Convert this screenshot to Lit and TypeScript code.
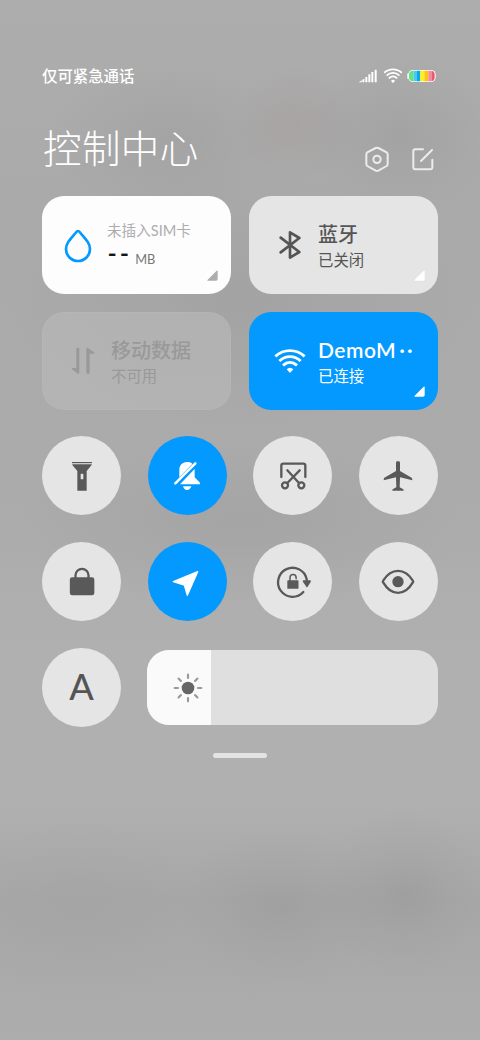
import { LitElement, html, svg, css } from "lit";
import { customElement } from "lit/decorators.js";

// Toggle glyphs are drawn around the origin in a 120-unit square.
const glyphs = {
  torch: svg`<rect x="-30" y="-42" width="60" height="3.6"/>
    <path fill-rule="evenodd" d="M-29-35H29V-33L14-15V44H-14V-15L-29-33ZM-2-7Q-4-7-4-5V8Q-4 10-2 10H2Q4 10 4 8V-5Q4-7 2-7Z"/>`,
  mute: svg`<path d="M-23 6V-19C-23-33-13-42 1-42C8-42 13-40 16-36L-23 4Z"/>
    <path d="M23-21V4L39 20V25H-21L22-20Z"/>
    <path d="M-12 31H13C11 38 6 42 0 42S-10 38-12 31Z"/>
    <path d="M-35 22L25-38" fill="none" stroke="currentColor" stroke-width="7.5" stroke-linecap="round"/>`,
  scissors: svg`<g fill="none" stroke="currentColor" stroke-width="7">
    <path d="M-35 3V-31Q-35-37-29-37H31Q37-37 37-31V3" stroke-linecap="round"/>
    <circle cx="-24" cy="28" r="9"/><circle cx="25" cy="28" r="9"/>
    <path d="M-17 21L20-17M18 21L-17-17" stroke-linecap="round"/></g>`,
  plane: svg`<path d="M-6-40Q-6-44-2-44H2Q6-44 6-40V-15L41 5Q43 7 43 13L6 4L5 34L16 40Q17 41 17 44H-17Q-17 41-16 40L-5 34L-6 4L-43 13Q-43 7-41 5L-6-15Z"/>`,
  lock: svg`<rect x="-36.500" y="-14" width="73.500" height="54" rx="7"/>
    <path d="M-19.500-12V-20A19.500 19.500 0 0 1 19.500-20V-12" fill="none" stroke="currentColor" stroke-width="7"/>`,
  locate: svg`<path d="M32-31L-41-1L-8 9L1 40Z" stroke="currentColor" stroke-width="4" stroke-linejoin="round"/>`,
  rotate: svg`<path d="M31 30A43.500 43.500 0 1 1 41-9V-3" fill="none" stroke="currentColor" stroke-width="7" stroke-linecap="round"/>
    <path d="M31-5H52Q55-3 53 0L44 14Q42 17 40 14L30 0Q28-3 31-5Z"/>
    <rect x="-17" y="-5" width="33.500" height="25.500" rx="2"/>
    <path d="M-9-4V-13A9.200 9.200 0 0 1 9.400-13V-10" fill="none" stroke="currentColor" stroke-width="4.500" stroke-linecap="round"/>`,
  eye: svg`<path d="M-44 2Q-47-1-44-5C-20-43 20-43 44-5Q47-1 44 2C20 43-20 43-44 2Z" fill="none" stroke="currentColor" stroke-width="7"/>
    <circle cy="-1" r="17"/>`,
};

const wifiArcs = svg`<g fill="none" stroke="currentColor" stroke-width="8.500">
  <path d="M-44-14Q-25-31 0-31T44-14"/><path d="M-32 0Q-18-13 0-13T32 0"/><path d="M-21 13Q-11 4 0 4T21 13"/></g>
  <path d="M-10 25Q0 15 10 25L2 34Q0 36-2 34Z"/>`;

@customElement("round-toggle")
class RoundToggle extends LitElement {
  static properties = { icon: {}, on: { type: Boolean, reflect: true } };
  declare icon: keyof typeof glyphs;
  declare on: boolean;
  static styles = css`
    :host { display: flex; align-items: center; justify-content: center; width: 79px; height: 79px; border-radius: 50%; background: #e5e5e5; color: #595959; }
    :host([on]) { background: #0399ff; color: #fff; }
    svg { width: 40px; height: 40px; fill: currentColor; overflow: visible; }
  `;
  render() {
    return html`<svg viewBox="-60 -60 120 120">${glyphs[this.icon]}</svg>`;
  }
}

@customElement("app-root")
class AppRoot extends LitElement {
  static styles = css`
    :host {
      display: block; box-sizing: border-box; width: 480px; height: 1040px; padding: 66px 42px 0; overflow: hidden;
      font-family: Lato, "Noto Sans CJK SC", sans-serif; line-height: 1;
      background:
        radial-gradient(ellipse 85px 85px at 405px 895px, rgba(125,125,125,.2), rgba(125,125,125,.08) 50%, transparent),
        radial-gradient(ellipse 105px 80px at 280px 908px, rgba(125,125,125,.17), rgba(125,125,125,.07) 50%, transparent),
        radial-gradient(ellipse 120px 90px at 80px 910px, rgba(130,130,130,.08), transparent),
        radial-gradient(ellipse 60px 60px at 295px 125px, rgba(150,130,125,.18), transparent),
        radial-gradient(ellipse 100px 80px at 400px 135px, rgba(130,130,130,.2), transparent),
        radial-gradient(ellipse 120px 80px at 170px 140px, rgba(135,135,135,.2), transparent),
        radial-gradient(ellipse 230px 130px at 240px 300px, rgba(140,140,140,.25), transparent),
        radial-gradient(ellipse 230px 80px at 240px 525px, rgba(145,140,140,.24), transparent),
        linear-gradient(#adadad, #aaa 200px, #ababab 500px, #b0b0b0 650px, #b0b0b0 800px, #a7a7a7 900px, #adadad);
    }
    header, .heading, .tools, .card, .amount, .brightness, .bottom { display: flex; }
    header { height: 20px; align-items: center; justify-content: space-between; color: #fff; }
    .carrier { font-size: 15.400px; font-weight: 500; padding-top: 2px; }
    .status { width: 80px; height: 20px; fill: currentColor; }
    .heading { height: 110px; justify-content: space-between; color: #fff; }
    h1 { margin: 42px 0 0 1px; font-size: 38.500px; line-height: 40px; letter-spacing: .4px; font-weight: 300; }
    .tools { width: 74px; padding-top: 59px; }
    .tools svg { width: 74px; height: 28px; overflow: visible; }
    .cards { display: grid; grid-template-columns: 189px 189px; grid-auto-rows: 98px; gap: 17.500px 18px; padding-top: .300px; margin-bottom: -.300px; }
    .card { position: relative; box-sizing: border-box; align-items: center; border-radius: 22px; background: #e5e5e5; color: #555; padding-left: 21px; gap: 8px; }
    .glyph { width: 40px; height: 40px; flex: none; fill: currentColor; overflow: visible; }
    .card.data { background: #fdfdfd; padding-left: 16px; gap: 9px; }
    .card.off { background: rgba(184,184,184,.65); color: #999; box-shadow: inset 0 0 0 1px rgba(190,190,190,.25); }
    .card.active { background: #0399ff; color: #fff; }
    .corner { position: absolute; right: 13px; bottom: 13px; width: 11px; height: 11px; fill: #fff; }
    .data .corner { fill: #adadad; }
    .label { font-size: 20px; font-weight: 500; line-height: 24px; padding-top: 2px; white-space: nowrap; }
    .sub { font-size: 15.400px; line-height: 20px; margin-top: 4px; white-space: nowrap; }
    .ssid { font-size: 21px; font-weight: 600; letter-spacing: .5px; }
    .dots { margin-left: 3px; letter-spacing: 2px; }
    .sim { font-size: 14.600px; line-height: 20px; padding-top: 1px; color: #adadad; white-space: nowrap; font-weight: 400; }
    .amount { align-items: center; height: 26px; margin-top: 4px; }
    .dash { display: inline-block; color: #151515; font: 700 20px/20px "Liberation Sans", sans-serif; letter-spacing: 3.200px; height: 29px; transform: scaleX(1.25); transform-origin: left; margin-left: 1px; margin-right: 7.500px; }
    .unit { color: #777; font-size: 12.800px; margin-top: 4px; }
    .toggles { display: grid; grid-template-columns: repeat(4, 79px); justify-content: space-between; row-gap: 27px; margin-top: 26.500px; }
    .bottom { margin-top: 27px; align-items: center; justify-content: space-between; }
    .auto { width: 79px; height: 79px; border-radius: 50%; background: #e5e5e5; color: #555; font-size: 36px; font-weight: 500; line-height: 76px; text-align: center; }
    .brightness { width: 291px; height: 75px; border-radius: 22px; overflow: hidden; background: #dfdfdf; }
    .level { display: flex; align-items: center; justify-content: center; box-sizing: border-box; padding-left: 18px; background: #fafafa; }
    .level svg { width: 40px; height: 40px; flex: none; fill: #666; }
    .handle { width: 54px; height: 5px; margin: 26px auto 0; border-radius: 3px; background: #e3e3e3; }
  `;

  corner = html`<svg class="corner" viewBox="0 0 33 33"><path d="M2 32Q0 32 2 29L29 2Q32 0 32 3V27Q32 32 27 32Z"/></svg>`;

  render() {
    const stripes = ["#62e67d", "#52c7e8", "#07a9f4", "#fff018", "#ffc21c", "#f08d98", "#ec596b"];
    const widths = [15, 11, 10, 12, 12, 11, 10];
    let x = 205;
    return html`
      <header>
        <span class="carrier">仅可紧急通话</span>
        <svg class="status" viewBox="54 33 240 60">
          <path d="M56 82L65 76V82ZM67 74L73 71V82H67ZM76 66H82V82H76ZM85 58H91V82H85ZM94 51H100V82H94ZM104 44H110V82H104Z"/>
          <g transform="translate(159 62) scale(.6 .62)">${wifiArcs}</g>
          <clipPath id="cell"><rect x="207" y="47" width="77" height="32" rx="12"/></clipPath>
          <rect x="205" y="45" width="82" height="36" rx="14"/><rect x="202" y="55" width="5" height="17" rx="2"/>
          <g clip-path="url(#cell)">${stripes.map((c, i) => { const s = svg`<rect x=${x} y="45" width=${widths[i]} height="36" fill=${c}/>`; x += widths[i]; return s; })}</g>
        </svg>
      </header>
      <div class="heading">
        <h1>控制中心</h1>
        <div class="tools">
          <svg viewBox="72 270 222 84" fill="none" stroke="#ececec" stroke-width="6" stroke-linejoin="round" stroke-linecap="round">
            <path d="M107 279Q111 277 115 279L140 292Q143 294 143 298V327Q143 331 140 333L115 347Q111 349 107 347L82 333Q79 331 79 327V298Q79 294 82 292Z"/>
            <circle cx="111" cy="313" r="11"/>
            <path d="M249 283H226Q220 283 220 289V337Q220 343 226 343H271Q277 343 277 337V314M243 318L276 285"/>
          </svg>
        </div>
      </div>
      <div class="cards">
        <div class="card data">
          <svg class="glyph" viewBox="-60 -60 120 120"><path d="M0-41Q3-41 5-38C22-18 36-5 36 13A36 36 0 0 1-36 13C-36-5-22-18-5-38Q-3-41 0-41Z" transform="translate(0 -1)" fill="none" stroke="#0399ff" stroke-width="8"/></svg>
          <div><div class="sim">未插入SIM卡</div><div class="amount"><span class="dash">--</span><span class="unit">MB</span></div></div>
          ${this.corner}
        </div>
        <div class="card">
          <svg class="glyph" viewBox="-60 -60 120 120"><path d="M-28-22L28 21L0 38V-38L28-21L-28 22" fill="none" stroke="currentColor" stroke-width="8" stroke-linejoin="round" stroke-linecap="round"/></svg>
          <div><div class="label">蓝牙</div><div class="sub">已关闭</div></div>
          ${this.corner}
        </div>
        <div class="card off">
          <svg class="glyph" viewBox="-60 -60 120 120"><path d="M-20-38Q-20-40-18-40H-13Q-11-40-11-38V36Q-11 39-15 38L-33 25Q-36 21-32 21H-20Z"/><path d="M10-36Q10-42 15-39L33-26Q36-22 32-22H20V35Q20 38 17 38H13Q10 38 10 35Z"/></svg>
          <div><div class="label">移动数据</div><div class="sub">不可用</div></div>
        </div>
        <div class="card active">
          <svg class="glyph" viewBox="-60 -60 120 120">${wifiArcs}</svg>
          <div><div class="label ssid">DemoM<span class="dots">··</span></div><div class="sub">已连接</div></div>
          ${this.corner}
        </div>
      </div>
      <div class="toggles">
        <round-toggle icon="torch"></round-toggle><round-toggle icon="mute" on></round-toggle>
        <round-toggle icon="scissors"></round-toggle><round-toggle icon="plane"></round-toggle>
        <round-toggle icon="lock"></round-toggle><round-toggle icon="locate" on></round-toggle>
        <round-toggle icon="rotate"></round-toggle><round-toggle icon="eye"></round-toggle>
      </div>
      <div class="bottom">
        <div class="auto">A</div>
        <div class="brightness"><div class="level" style="width:22%">
          <svg viewBox="-60 -60 120 120"><circle r="19"/><g stroke="#999" stroke-width="6.500" stroke-linecap="round">
            ${[0, 45, 90, 135, 180, 225, 270, 315].map((a) => svg`<path d="M0-30V-40" transform="rotate(${a})"/>`)}</g></svg>
        </div></div>
      </div>
      <div class="handle"></div>`;
  }
}
